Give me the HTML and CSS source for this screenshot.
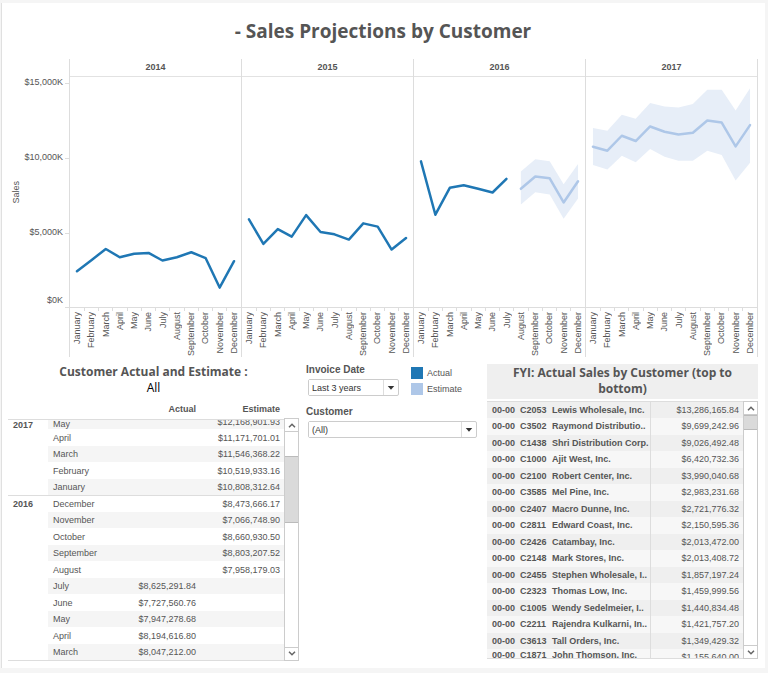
FILE: index.html
```html
<!DOCTYPE html>
<html lang="en">
    <head>
        <meta charset="UTF-8" />
        <meta name="viewport" content="width=device-width, initial-scale=1.0" />
        <title>Sales Projections by Customer</title>
        <link rel="stylesheet" href="styles.css">
    </head>

    <body>
        <main class="dashboard">
            <h1 class="title">- Sales Projections by Customer</h1>

            <section class="chart">
                <div class="axis">
                    <div class="axis-title"><span>Sales</span></div>
                    <ul class="axis-ticks">
                        <li>$15,000K</li>
                        <li>$10,000K</li>
                        <li>$5,000K</li>
                        <li>$0K</li>
                    </ul>
                </div>
                <div class="year">
                    <h2>2014</h2>
                    <svg class="plot" viewBox="0 0 172 231" preserveAspectRatio="none">
                        <polyline class="actual" points="7,195 21.5,184 36,172.7 50,181 64.5,177.5 79,176.7 93,184.3 107.5,181 122,176 136.5,182 150.5,211.5 165,185" />
                    </svg>
                    <ul class="months"></ul>
                </div>
                <div class="year">
                    <h2>2015</h2>
                    <svg class="plot" viewBox="0 0 172 231" preserveAspectRatio="none">
                        <polyline class="actual" points="7,143 21.5,167.7 36,152.7 50,160.3 64.5,138.7 79,155.7 93,158 107.5,163.3 122,147 136.5,150.3 150.5,173.3 165,161.7" />
                    </svg>
                    <ul class="months"></ul>
                </div>
                <div class="year">
                    <h2>2016</h2>
                    <svg class="plot" viewBox="0 0 172 231" preserveAspectRatio="none">
                        <polygon class="band" points="107.5,95 122,82.7 136.5,84.7 150.5,107.7 165,87.3 165,122 150.5,142.3 136.5,118 122,115.7 107.5,128" />
                        <polyline class="actual" points="7,84.7 21.5,138.3 36,111.3 50,108.7 64.5,112.3 79,116 93,102.3" />
                        <polyline class="estimate" points="107.5,112.3 122,100 136.5,101.7 150.5,126 165,104.7" />
                    </svg>
                    <ul class="months"></ul>
                </div>
                <div class="year">
                    <h2>2017</h2>
                    <svg class="plot" viewBox="0 0 172 231" preserveAspectRatio="none">
                        <polygon class="band" points="7,51.3 21.5,54 36,38 50,42 64.5,26 79,29.7 93,30.7 107.5,27 122,12.7 136.5,12.7 150.5,33.7 165,11.3 165,86 150.5,104 136.5,78.3 122,74 107.5,84 93,84 79,80 64.5,72.3 50,85.7 36,79 21.5,93 7,88.3" />
                        <polyline class="estimate" points="7,70 21.5,74 36,59 50,64.3 64.5,49.7 79,55 93,57.7 107.5,56 122,43.7 136.5,45.7 150.5,69.7 165,48.3" />
                    </svg>
                    <ul class="months"></ul>
                </div>
            </section>

            <div class="details">
                <section class="forecast">
                    <h2 class="caption">Customer Actual and Estimate :<br><span class="scope">All</span></h2>
                    <div class="scroll">
                        <table class="amounts">
                            <thead>
                                <tr>
                                    <th class="col-year"></th>
                                    <th></th>
                                    <th class="col-actual">Actual</th>
                                    <th class="col-estimate">Estimate</th>
                                </tr>
                            </thead>
                            <tbody id="amountList"></tbody>
                        </table>
                        <div class="scrollbar">
                            <button type="button" aria-label="Scroll up"><svg viewBox="0 0 8 5"><path d="M1 4.2 4 1.2 7 4.2" /></svg></button>
                            <div class="track"><div class="thumb"></div></div>
                            <button type="button" aria-label="Scroll down"><svg viewBox="0 0 8 5"><path d="M1 .8 4 3.8 7 .8" /></svg></button>
                        </div>
                    </div>
                </section>

                <section class="filters">
                    <div class="filter-row">
                        <div class="field date">
                            <label for="invoiceDate">Invoice Date</label>
                            <div class="select">
                                <select id="invoiceDate"><option>Last 3 years</option></select>
                                <svg viewBox="0 0 15 15"><path d="M4 6h7l-3.500 4z" /></svg>
                            </div>
                        </div>
                        <ul class="legend">
                            <li><i class="swatch actual"></i>Actual</li>
                            <li><i class="swatch estimate"></i>Estimate</li>
                        </ul>
                    </div>
                    <div class="field">
                        <label for="customer">Customer</label>
                        <div class="select">
                            <select id="customer"><option>(All)</option></select>
                            <svg viewBox="0 0 15 15"><path d="M4 6h7l-3.500 4z" /></svg>
                        </div>
                    </div>
                </section>

                <section class="ranking">
                    <h2 class="caption">FYI: Actual Sales by Customer (top to bottom)</h2>
                    <div class="scroll">
                        <table class="customers">
                            <tbody id="customerList"></tbody>
                        </table>
                        <div class="scrollbar">
                            <button type="button" aria-label="Scroll up"><svg viewBox="0 0 8 5"><path d="M1 4.2 4 1.2 7 4.2" /></svg></button>
                            <div class="track"><div class="thumb"></div></div>
                            <button type="button" aria-label="Scroll down"><svg viewBox="0 0 8 5"><path d="M1 .8 4 3.8 7 .8" /></svg></button>
                        </div>
                    </div>
                </section>
            </div>
        </main>

        <script>
            var months = ['January', 'February', 'March', 'April', 'May', 'June', 'July',
                'August', 'September', 'October', 'November', 'December'];

            // year, month, actual, estimate
            var amounts = [
                ['2017', 'May', '', '$12,168,901.93'],
                ['2017', 'April', '', '$11,171,701.01'],
                ['2017', 'March', '', '$11,546,368.22'],
                ['2017', 'February', '', '$10,519,933.16'],
                ['2017', 'January', '', '$10,808,312.64'],
                ['2016', 'December', '', '$8,473,666.17'],
                ['2016', 'November', '', '$7,066,748.90'],
                ['2016', 'October', '', '$8,660,930.50'],
                ['2016', 'September', '', '$8,803,207.52'],
                ['2016', 'August', '', '$7,958,179.03'],
                ['2016', 'July', '$8,625,291.84', ''],
                ['2016', 'June', '$7,727,560.76', ''],
                ['2016', 'May', '$7,947,278.68', ''],
                ['2016', 'April', '$8,194,616.80', ''],
                ['2016', 'March', '$8,047,212.00', '']
            ];

            var customers = [
                ['C2053', 'Lewis Wholesale, Inc.', '$13,286,165.84'],
                ['C3502', 'Raymond Distributio..', '$9,699,242.96'],
                ['C1438', 'Shri Distribution Corp.', '$9,026,492.48'],
                ['C1000', 'Ajit West, Inc.', '$6,420,732.36'],
                ['C2100', 'Robert Center, Inc.', '$3,990,040.68'],
                ['C3585', 'Mel Pine, Inc.', '$2,983,231.68'],
                ['C2407', 'Macro Dunne, Inc.', '$2,721,776.32'],
                ['C2811', 'Edward Coast, Inc.', '$2,150,595.36'],
                ['C2426', 'Catambay, Inc.', '$2,013,472.00'],
                ['C2148', 'Mark Stores, Inc.', '$2,013,408.72'],
                ['C2455', 'Stephen Wholesale, I..', '$1,857,197.24'],
                ['C2323', 'Thomas Low, Inc.', '$1,459,999.56'],
                ['C1005', 'Wendy Sedelmeier, I..', '$1,440,834.48'],
                ['C2211', 'Rajendra Kulkarni, In..', '$1,421,757.20'],
                ['C3613', 'Tall Orders, Inc.', '$1,349,429.32'],
                ['C1871', 'John Thomson, Inc.', '$1,155,640.00']
            ];

            document.querySelectorAll('.months').forEach(list => {
                list.innerHTML = months.map(month => `<li><span>${month}</span></li>`).join('');
            });

            var lastYear = '';
            document.getElementById('amountList').innerHTML = amounts.map(row => {
                var year = '';
                if (row[0] !== lastYear) {
                    lastYear = row[0];
                    var span = amounts.filter(item => item[0] === row[0]).length;
                    year = `<th class="year-cell" rowspan="${span}"><span>${row[0]}</span></th>`;
                }
                return `<tr class="${year ? 'first' : ''}">${year}
                    <td class="month"><span>${row[1]}</span></td>
                    <td><span>${row[2]}</span></td>
                    <td><span>${row[3]}</span></td>
                </tr>`;
            }).join('');

            document.getElementById('customerList').innerHTML = customers.map(row => `<tr>
                    <th class="branch"><span>00-00</span></th>
                    <th class="code"><span>${row[0]}</span></th>
                    <th class="name"><span>${row[1]}</span></th>
                    <td><span>${row[2]}</span></td>
                </tr>`).join('');
        </script>
    </body>
</html>
```

FILE: styles.css
```css
* {
    margin: 0;
    padding: 0;
    box-sizing: border-box;
}

body {
    padding: 3px 3px 6px 1px;
    background: #f5f5f5;
    color: #555;
    font-family: Arial, "Liberation Sans", sans-serif;
    font-size: 9px;
    line-height: 12px;
}

li {
    list-style-type: none;
}

.dashboard {
    padding: 0 7px 7px 6px;
    background: #fff;
    border-left: 1px solid #e0e0e0;
}

.title {
    height: 56px;
    line-height: 56px;
    font-family: "Trebuchet MS", "Open Sans", sans-serif;
    font-size: 19px;
    font-weight: 700;
    text-align: center;
}

/* chart */
.chart {
    display: grid;
    grid-template-columns: 61px repeat(4, 1fr);
    border-right: 1px solid #ddd;
}

.axis {
    display: flex;
    justify-content: space-between;
    padding-top: 17px;
    height: 249px;
}

.axis-title {
    display: flex;
    align-items: center;
    justify-content: flex-end;
    width: 14px;
}

.axis-title span {
    writing-mode: vertical-rl;
    transform: rotate(180deg);
}

.axis-ticks li {
    display: flex;
    justify-content: flex-end;
    gap: 2px;
    height: 75px;
}

.axis-ticks li::after {
    content: "";
    width: 4px;
    height: 1px;
    margin-top: 7px;
    background: #ddd;
}

.axis-ticks li:nth-child(3) {
    height: 68px;
}

.axis-ticks li:last-child {
    height: 14px;
}

.axis-ticks li:last-child::after {
    margin-top: 13px;
}

.year {
    border-left: 1px solid #ddd;
}

.year h2 {
    height: 18px;
    line-height: 16px;
    font-size: 9px;
    text-align: center;
    border-bottom: 1px solid #e2e2e2;
}

.plot {
    display: block;
    width: 100%;
    height: 230px;
}

.plot polyline {
    fill: none;
    stroke-width: 2.500;
    stroke-linecap: round;
    stroke-linejoin: round;
}

.plot .actual {
    stroke: #1f77b4;
}

.plot .estimate {
    stroke: #aec7e8;
}

.plot .band {
    fill: #e7eef8;
}

.months {
    display: grid;
    grid-template-columns: repeat(12, 1fr);
    height: 50px;
    border-top: 1px solid #ddd;
}

.months li {
    display: flex;
    flex-direction: column;
    align-items: center;
}

.months li::before {
    content: "";
    width: 100%;
    height: 3px;
    margin-bottom: 1px;
    border-left: 1px solid #ddd;
}

.months li:first-child::before {
    border-left: none;
}

.months span {
    writing-mode: vertical-rl;
    transform: rotate(180deg);
}

/* lower part */
.details {
    display: grid;
    grid-template-columns: 298fr 181fr 271fr;
    margin-top: 7px;
}

.caption {
    font-family: "Trebuchet MS", "Open Sans", sans-serif;
    font-size: 12px;
    font-weight: 700;
    line-height: 16px;
    text-align: center;
}

.scope {
    color: #000;
    font-weight: 400;
}

.scroll {
    display: flex;
    align-items: flex-start;
}

table {
    flex: 1;
    border-collapse: collapse;
    table-layout: fixed;
}

td {
    text-align: right;
}

td span,
th span {
    display: block;
    white-space: nowrap;
}

/* alternating heights keep the rows at 16.5px on average */
tbody td {
    height: 16px;
}

tbody tr:nth-child(even) td {
    height: 17px;
}

.forecast {
    padding-right: 7px;
}

.amounts {
    margin-top: 4px;
    border-bottom: 1px solid #ddd;
}

.amounts thead th {
    height: 19px;
    padding-right: 4px;
    text-align: right;
    border-bottom: 1px solid #ddd;
}

.amounts .col-year {
    width: 40px;
}

.amounts .col-actual {
    width: 88px;
}

.amounts .col-estimate {
    width: 84px;
}

.amounts td {
    padding-right: 4px;
}

.amounts .month {
    padding-left: 5px;
    text-align: left;
}

.amounts .year-cell {
    padding: 2px 0 0 5px;
    text-align: left;
    vertical-align: top;
}

.amounts tbody tr:nth-child(odd) td {
    background: #f5f5f5;
}

.amounts tbody .first th,
.amounts tbody .first td {
    border-top: 1px solid #ddd;
}

/* first visible row is scrolled half out of view */
.amounts tbody tr:first-child td {
    height: 10px;
    vertical-align: top;
}

.amounts tbody tr:first-child td span {
    height: 9px;
    line-height: 4px;
    overflow: hidden;
}

.amounts tbody tr:first-child .month span {
    line-height: 8px;
}

.amounts tbody tr:first-child .year-cell {
    padding-top: 0;
    line-height: 10px;
}

.scrollbar {
    display: flex;
    flex-direction: column;
    align-self: stretch;
    width: 15px;
    border: 1px solid #ccc;
}

.scrollbar button {
    display: flex;
    align-items: center;
    justify-content: center;
    height: 13px;
    background: #fff;
    border: 0 solid #ccc;
    border-bottom-width: 1px;
}

.scrollbar button:last-child {
    border-width: 1px 0 0;
}

.scrollbar button svg {
    width: 8px;
    height: 5px;
    fill: none;
    stroke: #666;
    stroke-width: 1.500;
}

.track {
    flex: 1;
}

.thumb {
    background: #dadada;
    border: solid #bbb;
    border-width: 1px 0;
}

.forecast .scrollbar {
    margin-top: 22px;
}

.forecast .thumb {
    height: 67px;
    margin-top: 24px;
}

/* filters */
.filters {
    padding-right: 10px;
}

.filter-row {
    display: flex;
    gap: 12px;
    margin-bottom: 10px;
}

.field label {
    display: block;
    margin-bottom: 3px;
    font-size: 10px;
    font-weight: 700;
}

.date {
    width: 93px;
}

.select {
    display: flex;
    height: 17px;
    margin-left: 2px;
    border: 1px solid #ccc;
    border-radius: 2px;
}

.select select {
    flex: 1;
    min-width: 0;
    padding-left: 3px;
    appearance: none;
    background: #fff;
    border: none;
    color: #333;
    font: inherit;
}

.select svg {
    width: 15px;
    height: 15px;
    fill: #333;
    border-left: 1px solid #ddd;
}

.legend {
    height: 32px;
    padding-top: 3px;
}

.legend li {
    display: flex;
    align-items: center;
    gap: 4px;
    margin-bottom: 4px;
}

.swatch {
    width: 12px;
    height: 12px;
}

.swatch.actual {
    background: #1f77b4;
}

.swatch.estimate {
    background: #aec7e8;
}

/* ranking */
.ranking .caption {
    padding: 1px 12px 2px;
    margin-bottom: 2px;
    background: #efefef;
}

.customers {
    border: solid #ddd;
    border-width: 1px 0;
}

.customers tr {
    background: #f7f7f7;
}

.customers tr:nth-child(odd) {
    background: #efefef;
}

.customers th {
    text-align: left;
}

.customers .branch {
    width: 33px;
    padding-left: 5px;
}

.customers .code {
    width: 32px;
}

.customers .name {
    width: 98px;
    border-right: 1px solid #ddd;
}

.customers td {
    padding-right: 4px;
}

/* last row is cut by the lower edge */
.customers tr:last-child td {
    height: 10px;
}

.customers tr:last-child span {
    height: 9px;
    line-height: 12px;
    overflow: hidden;
}

.customers tr:last-child td span {
    line-height: 16px;
}

.ranking .thumb {
    height: 15px;
}
```
